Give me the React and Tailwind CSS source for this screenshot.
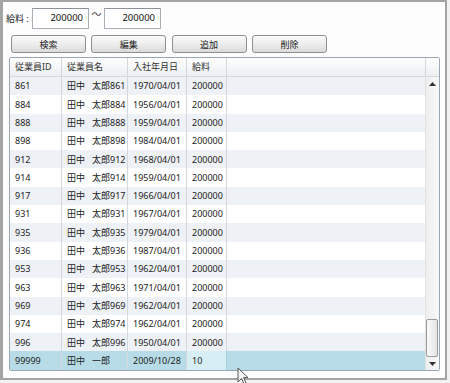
import React from "react";

const rows = [
  ["861", "太郎861", "1970/04/01", "200000"],
  ["884", "太郎884", "1956/04/01", "200000"],
  ["888", "太郎888", "1959/04/01", "200000"],
  ["898", "太郎898", "1984/04/01", "200000"],
  ["912", "太郎912", "1968/04/01", "200000"],
  ["914", "太郎914", "1959/04/01", "200000"],
  ["917", "太郎917", "1966/04/01", "200000"],
  ["931", "太郎931", "1967/04/01", "200000"],
  ["935", "太郎935", "1979/04/01", "200000"],
  ["936", "太郎936", "1987/04/01", "200000"],
  ["953", "太郎953", "1962/04/01", "200000"],
  ["963", "太郎963", "1971/04/01", "200000"],
  ["969", "太郎969", "1962/04/01", "200000"],
  ["974", "太郎974", "1962/04/01", "200000"],
  ["996", "太郎996", "1950/04/01", "200000"],
];

function Btn({ children }) {
  return (
    <div className="w-[75px] h-[18px] rounded-[3px] border border-[#8e8f8f] bg-gradient-to-b from-[#fbfbfb] via-[#ededed] to-[#dadada] flex items-center justify-center text-[9px] text-[#222] leading-none">
      {children}
    </div>
  );
}

function Input({ value }) {
  return (
    <div className="w-[57px] h-[21px] border border-[#a9aeb5] border-t-[#8d939b] bg-white flex items-center justify-end pr-[5px] text-[9.5px] text-[#111]">
      {value}
    </div>
  );
}

function Row({ id, first, name, date, sal, bg, selected }) {
  const cell = "h-full flex items-center pl-[5px] border-r border-[#d3d8de] whitespace-nowrap overflow-hidden";
  return (
    <div className={`flex h-[18.3px] ${bg}`}>
      <div className={`${cell} w-[52px]`}>{id}</div>
      <div className={`${cell} w-[66px]`}>
        <span>{first}</span>
        <span className="ml-[7px]">{name}</span>
      </div>
      <div className={`${cell} w-[59px]`}>{date}</div>
      <div
        className={`${cell} w-[40px] ${
          selected ? "bg-[#d8eef5] border-r-[#a9d3e1]" : ""
        }`}
      >
        {sal}
      </div>
      <div className="flex-1 h-full"></div>
    </div>
  );
}

export default function App() {
  return (
    <div
      className="w-[450px] h-[383px] bg-[#f2f2f2] relative overflow-hidden text-[#222]"
      style={{ fontFamily: '"Noto Sans", "Noto Sans CJK JP", sans-serif' }}
    >
      <div className="w-[447px] h-[380px] border-t-[2px] border-l-[3px] border-r-[2px] border-b-[2px] border-[#a4a4a4] bg-[#fdfdfd] flex flex-col">
        {/* filter row */}
        <div className="flex items-center mt-[6px] h-[21px]">
          <div className="w-[29px] pl-[3px] text-[9px] leading-none whitespace-nowrap">給料 :</div>
          <Input value="200000" />
          <div className="w-[15px] h-full flex justify-center items-start pt-[1px] text-[10px] leading-none text-[#444]">
            ～
          </div>
          <Input value="200000" />
        </div>
        {/* buttons */}
        <div className="flex mt-[6px] ml-[8px] gap-[5.3px]">
          <Btn>検索</Btn>
          <Btn>編集</Btn>
          <Btn>追加</Btn>
          <Btn>削除</Btn>
        </div>
        {/* grid */}
        <div className="mt-[4px] ml-[6px] w-[431px] h-[314px] border border-[#9aa6b2] rounded-[2px] flex flex-col bg-white text-[9px] overflow-hidden">
          {/* header */}
          <div className="flex h-[19px] bg-gradient-to-b from-[#ffffff] to-[#eceef1] border-b border-[#d3d8de] text-[#333]">
            <div className="w-[52px] border-r border-[#d3d8de] pl-[5px] flex items-center">従業員ID</div>
            <div className="w-[66px] border-r border-[#d3d8de] pl-[5px] flex items-center">従業員名</div>
            <div className="w-[59px] border-r border-[#d3d8de] pl-[5px] flex items-center">入社年月日</div>
            <div className="w-[40px] border-r border-[#d3d8de] pl-[5px] flex items-center">給料</div>
            <div className="flex-1 border-r border-[#d3d8de]"></div>
            <div className="w-[13px]"></div>
          </div>
          <div className="flex flex-1">
            <div className="flex-1 flex flex-col">
              {rows.map((r, i) => (
                <Row
                  key={r[0]}
                  id={r[0]}
                  first="田中"
                  name={r[1]}
                  date={r[2]}
                  sal={r[3]}
                  bg={i % 2 === 0 ? "bg-[#eef1f5]" : "bg-white"}
                />
              ))}
              <Row
                id="99999"
                first="田中"
                name="一郎"
                date="2009/10/28"
                sal="10"
                bg="bg-[#b8dce7]"
                selected
              />
            </div>
            {/* scrollbar */}
            <div className="w-[14px] flex flex-col bg-gradient-to-r from-[#eeeeee] to-[#f8f8f8] border-l border-[#e2e2e2]">
              <div className="h-[13px] flex items-center justify-center">
                <svg width="7" height="4" viewBox="0 0 7 4">
                  <path d="M3.5 0 L7 4 L0 4 Z" fill="#333" />
                </svg>
              </div>
              <div className="flex-1"></div>
              <div className="h-[38px] mr-[1px] rounded-[2px] border border-[#9a9a9a] bg-gradient-to-r from-[#fafafa] to-[#e4e4e4]"></div>
              <div className="h-[13px] flex items-center justify-center">
                <svg width="7" height="4" viewBox="0 0 7 4">
                  <path d="M0 0 L7 0 L3.5 4 Z" fill="#333" />
                </svg>
              </div>
            </div>
          </div>
        </div>
      </div>
      {/* mouse cursor */}
      <svg
        className="absolute left-[237px] top-[367px]"
        width="13"
        height="19"
        viewBox="0 0 13 19"
      >
        <path
          d="M1 1 L1 15 L4.5 11.5 L7 17 L9 16 L6.6 10.6 L11 10.6 Z"
          fill="#f4f4f4"
          stroke="#555"
          strokeWidth="1"
          strokeLinejoin="round"
        />
      </svg>
    </div>
  );
}
